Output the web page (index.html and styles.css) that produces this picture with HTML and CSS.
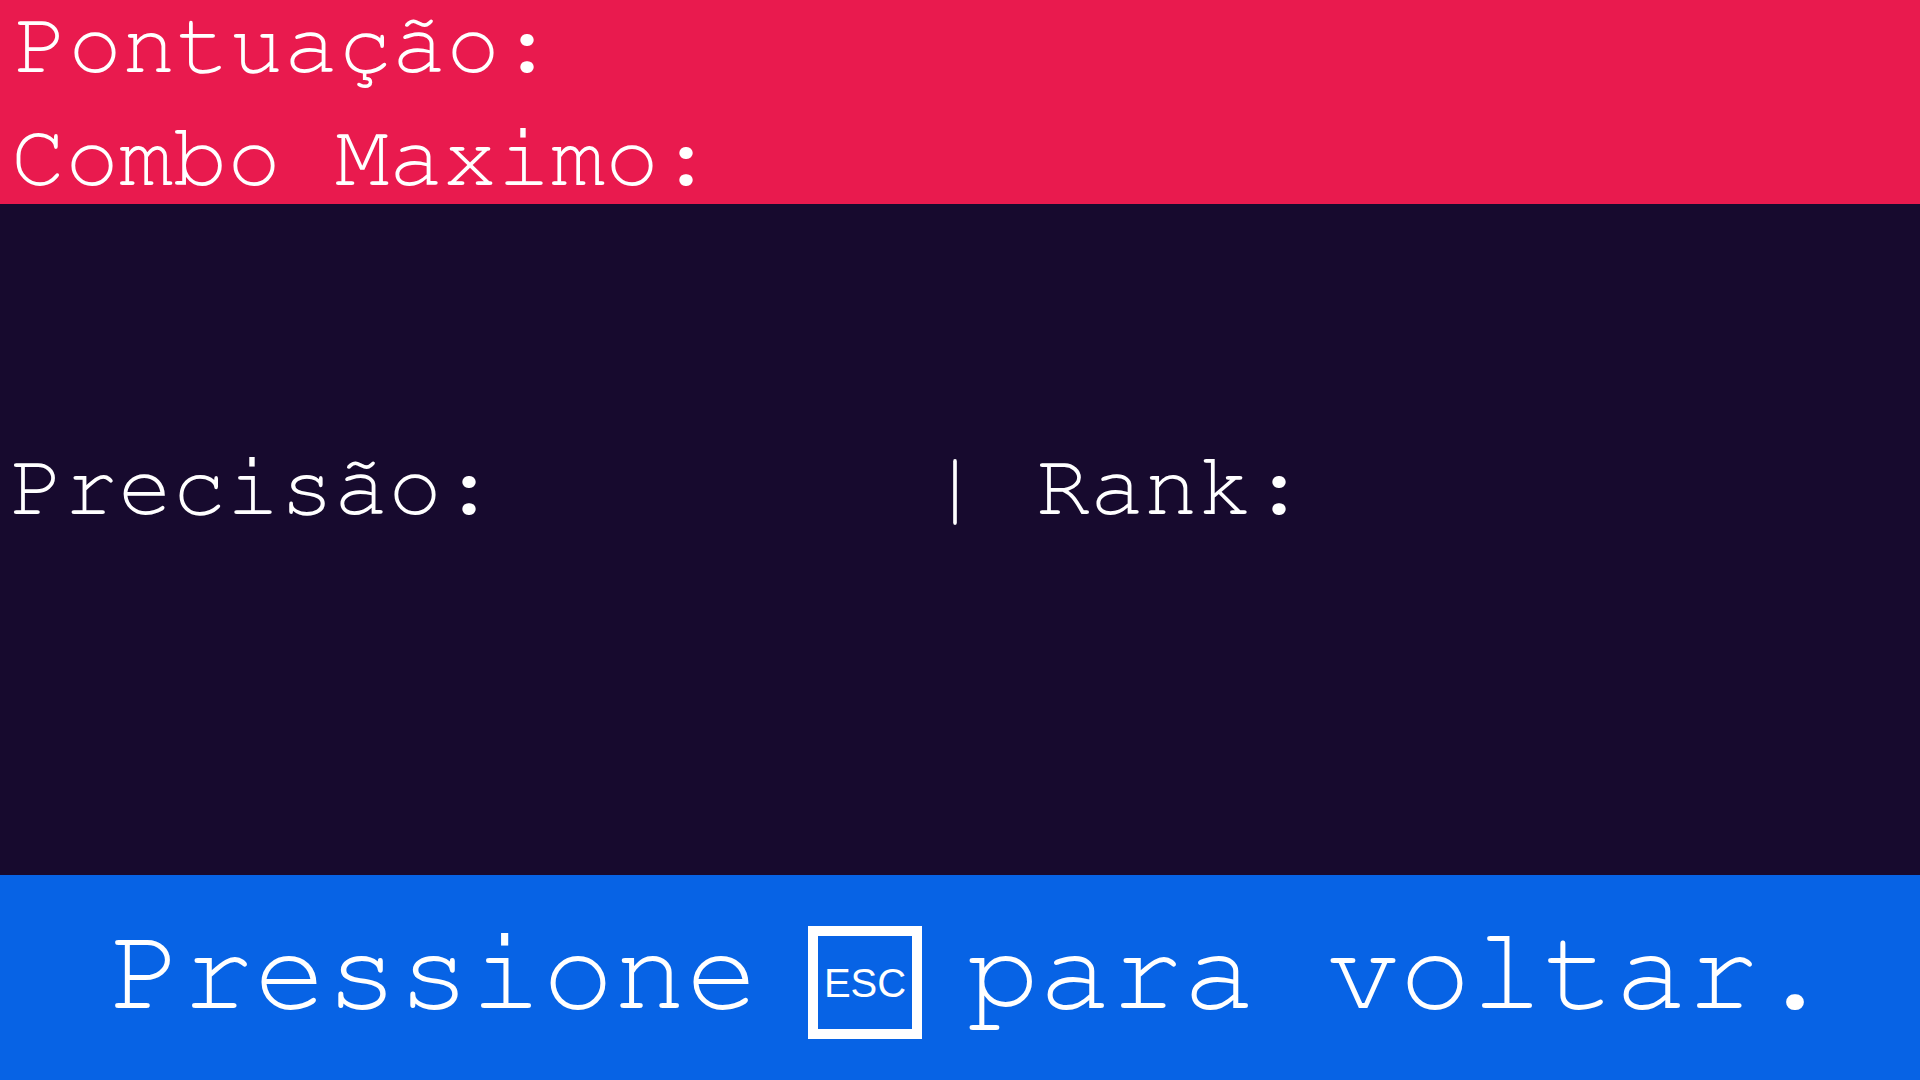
FILE: index.html
```html
<!DOCTYPE html>
<html lang="pt">
<head>
<meta charset="utf-8">
<title>Resultado</title>
<link rel="stylesheet" href="styles.css">
</head>
<body>
<div class="screen">
  <header class="stats">
    <div class="line line-score">Pontuação:</div>
    <div class="line line-combo">Combo Maximo:</div>
  </header>
  <main class="middle">
    <div class="line">Precisão:        | Rank:</div>
  </main>
  <footer class="footer">
    <span class="big">Pressione</span>
    <span class="key"><span class="key-label">ESC</span></span>
    <span class="big">para voltar.</span>
  </footer>
</div>
</body>
</html>
```
FILE: styles.css
```css
html, body {
  margin: 0;
  padding: 0;
}
body {
  width: 1920px;
  height: 1080px;
  overflow: hidden;
  background: #170a2e;
  color: #ffffff;
  font-family: "FreeMono", "Liberation Mono", monospace;
}
.screen {
  display: flex;
  flex-direction: column;
  height: 1080px;
}
.line {
  font-size: 90px;
  line-height: 90px;
  white-space: pre;
}
.line-score {
  padding-left: 4px;
}
.line-combo {
  padding-left: 1px;
}
.stats {
  background: #e91a4e;
  height: 204px;
  box-sizing: border-box;
  padding: 0 0 0 10px;
  display: flex;
  flex-direction: column;
  gap: 23px;
}
.middle {
  flex: 1;
  background: #170a2e;
  box-sizing: border-box;
  padding: 238px 0 0 10px;
}
.footer {
  background: #0763e5;
  height: 205px;
  box-sizing: border-box;
  padding: 37px 0 0 110px;
  display: flex;
  align-items: flex-start;
}
.big {
  font-size: 120px;
  line-height: 120px;
  white-space: pre;
}
.key {
  box-sizing: border-box;
  width: 114px;
  height: 113px;
  border: 10px solid #ffffff;
  margin: 14px 45px 0 50px;
  display: flex;
  align-items: center;
  justify-content: center;
}
.key-label {
  font-family: "Liberation Sans", Arial, sans-serif;
  font-size: 40px;
  line-height: 1;
  color: #ffffff;
}
```
